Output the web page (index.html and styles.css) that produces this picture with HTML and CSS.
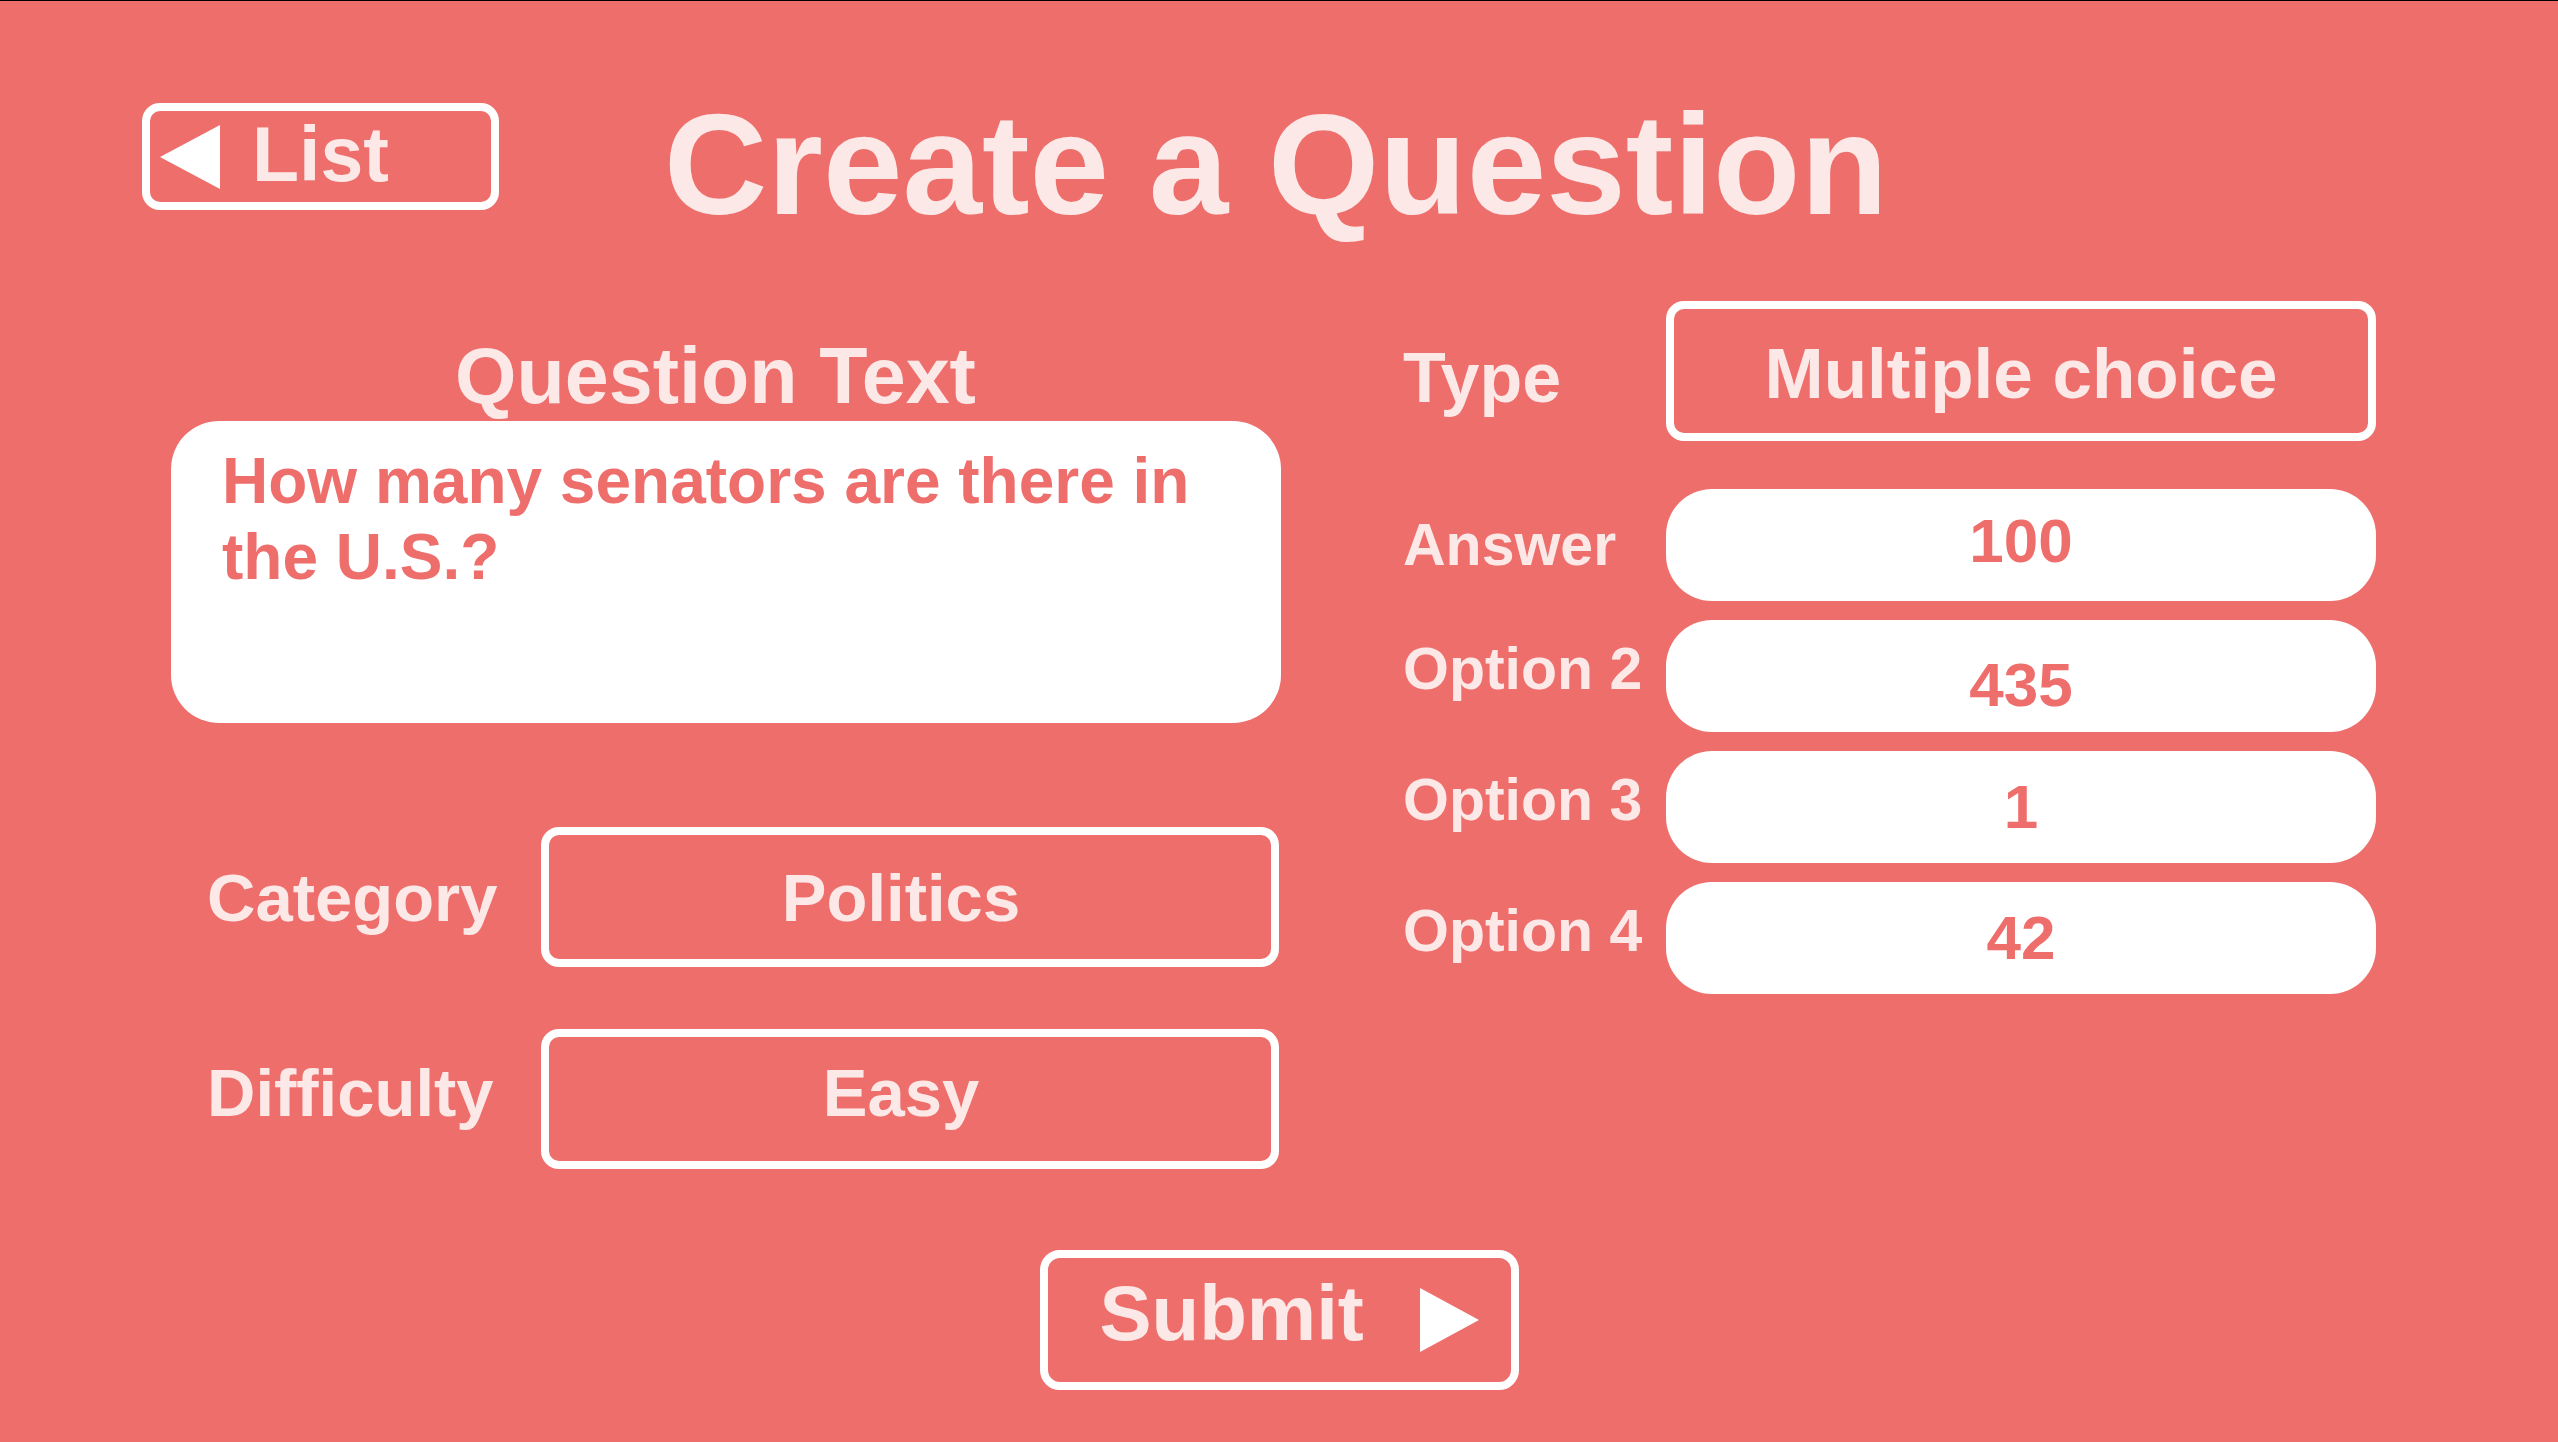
FILE: index.html
```html
<!DOCTYPE html>
<html lang="en">
<head>
<meta charset="utf-8">
<title>Create a Question</title>
<link rel="stylesheet" href="styles.css">
</head>
<body>
<div class="page">
  <header class="header">
    <button class="list-btn" type="button">
      <svg class="tri" width="60" height="64" viewBox="0 0 60 64"><polygon points="60,0 60,64 0,32" fill="#ffffff"/></svg>
      <span class="list-text">List</span>
    </button>
    <h1 class="title">Create a Question</h1>
  </header>

  <main class="main">
    <section class="left-col">
      <h2 class="qt-heading">Question Text</h2>
      <div class="qt-box">How many senators are there in the U.S.?</div>

      <div class="field-row first">
        <div class="field-label">Category</div>
        <div class="select-box">Politics</div>
      </div>
      <div class="field-row second">
        <div class="field-label raised">Difficulty</div>
        <div class="select-box raised">Easy</div>
      </div>
    </section>

    <section class="right-col">
      <div class="type-row">
        <div class="type-label">Type</div>
        <div class="select-box type-box">Multiple choice</div>
      </div>
      <div class="answers">
        <div class="ans-row">
          <div class="ans-label">Answer</div>
          <div class="pill high">100</div>
        </div>
        <div class="ans-row">
          <div class="ans-label up">Option 2</div>
          <div class="pill low">435</div>
        </div>
        <div class="ans-row">
          <div class="ans-label up">Option 3</div>
          <div class="pill">1</div>
        </div>
        <div class="ans-row">
          <div class="ans-label up">Option 4</div>
          <div class="pill">42</div>
        </div>
      </div>
    </section>
  </main>

  <footer class="footer">
    <button class="submit-btn" type="button">
      <span class="submit-text">Submit</span>
      <svg class="tri" width="59" height="64" viewBox="0 0 59 64"><polygon points="0,0 59,32 0,64" fill="#ffffff"/></svg>
    </button>
  </footer>
</div>
</body>
</html>
```

FILE: styles.css
```css
* { box-sizing: border-box; }

html, body {
  margin: 0;
  padding: 0;
  background: #ee6e6c;
}

.page {
  width: 2558px;
  height: 1442px;
  overflow: hidden;
  border-top: 1px solid #000;
  background: #ee6e6c;
  color: #fce9e7;
  font-family: "Liberation Sans", Arial, Helvetica, sans-serif;
  font-weight: bold;
  font-variant-ligatures: none;
  display: flex;
  flex-direction: column;
}

.header {
  display: flex;
  align-items: flex-start;
  padding: 92px 0 0 142px;
  height: 235px;
}

.list-btn {
  margin-top: 10px;
  width: 357px;
  height: 107px;
  border: 8px solid #fff;
  border-radius: 18px;
  background: transparent;
  display: flex;
  align-items: center;
  padding: 0 0 0 10px;
  gap: 32px;
  font: inherit;
  color: #fce9e7;
  cursor: pointer;
}

.tri { display: block; flex: none; }

.list-text {
  font-size: 77px;
  line-height: 1;
  padding-bottom: 4px;
}

.title {
  margin: 0 0 0 165px;
  font-size: 143px;
  line-height: 143px;
  font-weight: bold;
}

.main {
  display: flex;
  align-items: flex-start;
  padding: 65px 0 0 171px;
  gap: 121px;
}

.left-col {
  width: 1110px;
  padding-top: 36px;
  display: flex;
  flex-direction: column;
}

.qt-heading {
  margin: 0;
  padding-right: 21px;
  text-align: center;
  font-size: 79px;
  line-height: 78px;
  font-weight: bold;
}

.qt-box {
  margin-top: 6px;
  height: 302px;
  background: #fff;
  border-radius: 48px;
  padding: 22px 51px 0 51px;
  color: #ee6e6c;
  font-size: 64px;
  line-height: 76px;
}

.field-row {
  display: flex;
  align-items: center;
  padding-left: 36px;
}
.field-row.first { margin-top: 104px; }
.field-row.second { margin-top: 62px; }

.field-label {
  width: 334px;
  flex: none;
  font-size: 67px;
  line-height: 1;
}

.select-box {
  flex: 1;
  height: 140px;
  margin-right: 2px;
  border: 8px solid #fff;
  border-radius: 18px;
  display: flex;
  align-items: center;
  justify-content: center;
  font-size: 67px;
  line-height: 1;
  padding-right: 18px;
}

.field-label.raised { padding-bottom: 14px; }
.select-box.raised { padding-bottom: 14px; }

.right-col {
  width: 974px;
  display: flex;
  flex-direction: column;
}

.type-row {
  display: flex;
  align-items: center;
}

.type-label {
  width: 264px;
  flex: none;
  font-size: 70px;
  line-height: 1;
  padding-top: 14px;
  padding-left: 1px;
}

.type-box {
  margin-right: 0;
  font-size: 71px;
  padding-right: 0;
  padding-top: 4px;
}

.answers {
  margin-top: 48px;
  display: flex;
  flex-direction: column;
  gap: 19px;
}

.ans-row {
  display: flex;
  align-items: center;
}

.ans-label {
  width: 264px;
  flex: none;
  font-size: 59px;
  line-height: 1;
  padding-left: 1px;
}
.ans-label.up { padding-bottom: 14px; }

.pill {
  flex: 1;
  height: 112px;
  background: #fff;
  border-radius: 46px;
  display: flex;
  align-items: center;
  justify-content: center;
  color: #ee6e6c;
  font-size: 62px;
  line-height: 1;
}
.pill.high { padding-bottom: 8px; }
.pill.low { padding-top: 18px; }

.footer {
  display: flex;
  justify-content: center;
  margin-top: 81px;
}

.submit-btn {
  width: 479px;
  height: 140px;
  border: 8px solid #fff;
  border-radius: 20px;
  background: transparent;
  display: flex;
  align-items: center;
  padding: 0 0 0 52px;
  gap: 56px;
  font: inherit;
  color: #fce9e7;
  cursor: pointer;
}

.submit-text {
  font-size: 78px;
  line-height: 1;
  padding-bottom: 14px;
}
```
